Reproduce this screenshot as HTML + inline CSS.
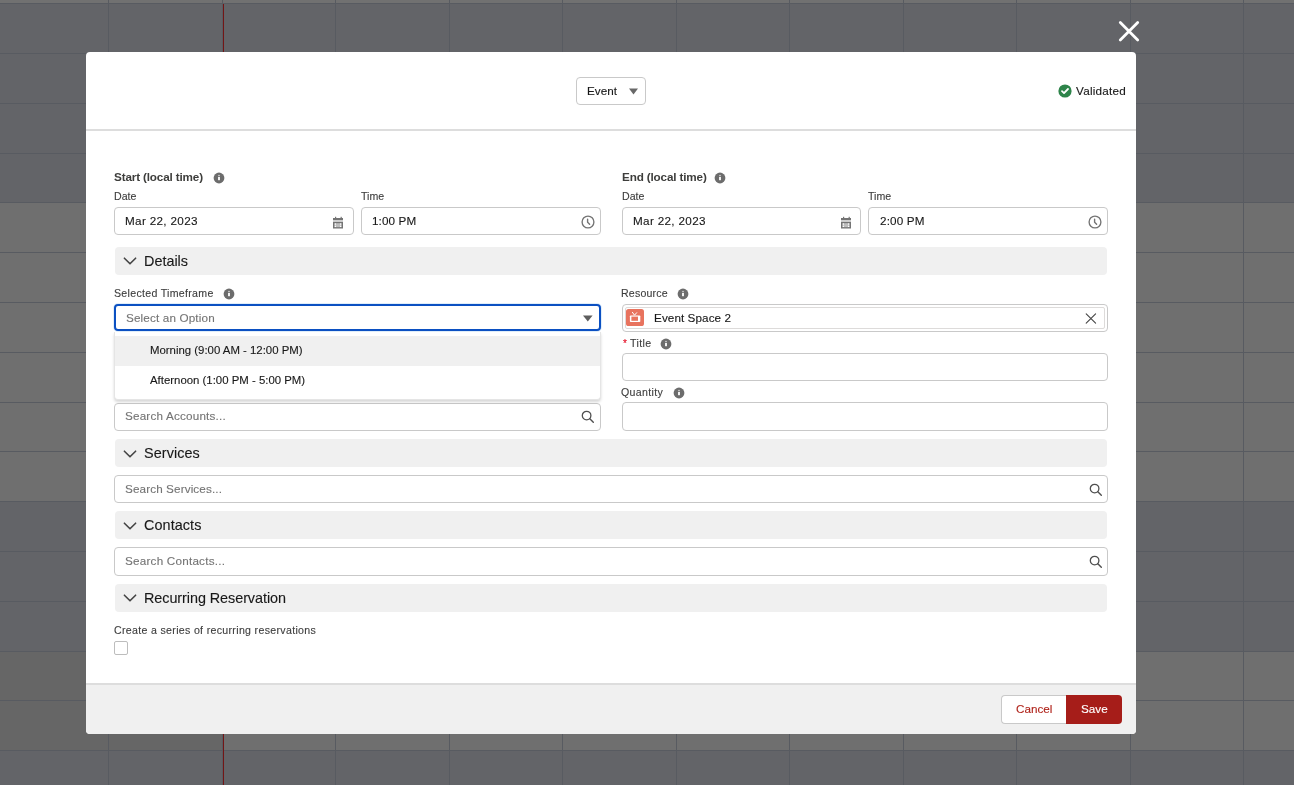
<!DOCTYPE html>
<html><head><meta charset="utf-8">
<style>
*{box-sizing:border-box;margin:0;padding:0}
html,body{width:1294px;height:785px;overflow:hidden}
body{position:relative;-webkit-font-smoothing:antialiased;background:#636468;font-family:"Liberation Sans",sans-serif;color:#181818}
.abs{position:absolute}
.row{position:absolute;left:0;width:1294px}
.hl{position:absolute;left:0;width:1294px;height:1px;background:#585b61}
.vl{position:absolute;top:0;width:1px;height:785px;background:#585b61}
.t{position:absolute;white-space:nowrap;line-height:1;will-change:transform;-webkit-text-stroke:0.12px currentColor}
.modal{position:absolute;left:86px;top:52px;width:1050px;height:682px;background:#fff;border-radius:4px;overflow:hidden}
.inp{position:absolute;border:1px solid #c9c9c9;border-radius:4px;background:#fff}
.sec{position:absolute;left:115px;width:992px;height:28px;background:#f0f0f0;border-radius:4px}
.lbl{font-size:10.6px;color:#3e3e3e}
.val{font-size:11.7px;color:#181818}
.ph{font-size:11.7px;color:#747474}
.b{font-size:11.7px;font-weight:bold;color:#3e3e3c;-webkit-text-stroke:0;letter-spacing:-0.15px}
.h{font-size:14.4px;color:#181818}
</style></head><body>
<div class="row" style="top:0;height:3px;background:#717171"></div>
<div class="row" style="top:202px;height:299px;background:#6f6f6f"></div>
<div class="row" style="top:651px;height:99px;background:#6f6f6f"></div>
<div class="abs" style="left:0;top:651px;width:223px;height:99px;background:#666666"></div>
<div class="hl" style="top:3px"></div>
<div class="hl" style="top:53px"></div>
<div class="hl" style="top:103px"></div>
<div class="hl" style="top:153px"></div>
<div class="hl" style="top:202px"></div>
<div class="hl" style="top:252px"></div>
<div class="hl" style="top:302px"></div>
<div class="hl" style="top:352px"></div>
<div class="hl" style="top:402px"></div>
<div class="hl" style="top:451px"></div>
<div class="hl" style="top:501px"></div>
<div class="hl" style="top:551px"></div>
<div class="hl" style="top:601px"></div>
<div class="hl" style="top:651px"></div>
<div class="hl" style="top:700px"></div>
<div class="hl" style="top:750px"></div>
<div class="vl" style="left:108px"></div>
<div class="vl" style="left:222px"></div>
<div class="vl" style="left:335px"></div>
<div class="vl" style="left:449px"></div>
<div class="vl" style="left:562px"></div>
<div class="vl" style="left:676px"></div>
<div class="vl" style="left:789px"></div>
<div class="vl" style="left:903px"></div>
<div class="vl" style="left:1016px"></div>
<div class="vl" style="left:1130px"></div>
<div class="vl" style="left:1243px"></div>
<div class="abs" style="left:223px;top:4px;width:1px;height:781px;background:#731515"></div>
<svg class="abs" style="left:1117px;top:19px" width="24" height="24" viewBox="0 0 24 24"><path d="M3.3 3.5L20.7 20.9M20.7 3.5L3.3 20.9" stroke="#fff" stroke-width="2.8" stroke-linecap="round"/></svg>
<div class="modal"></div>
<div class="abs" style="left:576px;top:77px;width:70px;height:28px;border:1px solid #c9c9c9;border-radius:4px"></div>
<div class="t val" style="left:586.7px;top:85px;">Event</div>
<svg class="abs" style="left:629px;top:88px" width="9" height="7" viewBox="0 0 9 7"><path d="M0 0.4H9L4.5 6.4Z" fill="#686868"/></svg>
<svg class="abs" style="left:1058px;top:83.6px" width="14" height="14" viewBox="0 0 14 14"><circle cx="7" cy="7" r="6.6" fill="#2e844a"/><path d="M4 7.2L6 9.1L10 5" stroke="#fff" stroke-width="1.8" fill="none" stroke-linecap="round" stroke-linejoin="round"/></svg>
<div class="t val" style="left:1076px;top:85px;letter-spacing:0.24px">Validated</div>
<div class="abs" style="left:86px;top:129px;width:1050px;height:2px;background:#dddddd"></div>
<div class="t b" style="left:113.6px;top:171px;">Start (local time)</div>
<svg class="abs" style="left:213px;top:172px" width="12" height="12" viewBox="0 0 12 12"><circle cx="6" cy="6" r="5.4" fill="#6c6c6c"/><rect x="5.1" y="2.9" width="1.8" height="1.2" fill="#fff" opacity="0.6"/><rect x="5.1" y="4.9" width="1.8" height="3.3" fill="#fff"/></svg>
<div class="t lbl" style="left:113.8px;top:191px;">Date</div>
<div class="t lbl" style="left:360.8px;top:191px;">Time</div>
<div class="inp" style="left:114px;top:207px;width:240px;height:28px;"></div>
<div class="t val" style="left:124.7px;top:215.3px;letter-spacing:0.33px">Mar 22, 2023</div>
<svg class="abs" style="left:333px;top:216px" width="11" height="13" viewBox="0 0 11 13"><rect x="2" y="0.8" width="1.2" height="1.6" fill="#747474"/><rect x="7.6" y="0.8" width="1.2" height="1.6" fill="#747474"/><rect x="0" y="2" width="10" height="2" fill="#747474"/><rect x="0" y="4.2" width="10" height="1.3" fill="#c4c4c4"/><rect x="0" y="5.8" width="10" height="6.7" fill="#747474"/><rect x="1.5" y="7.2" width="7" height="4" fill="#bdbdbd"/><rect x="1.7" y="7.4" width="1.3" height="1.3" fill="#fff"/><rect x="7" y="7.4" width="1.3" height="1.3" fill="#fff"/><rect x="1.7" y="9.7" width="1.3" height="1.3" fill="#fff"/><rect x="7" y="9.7" width="1.3" height="1.3" fill="#fff"/></svg>
<div class="inp" style="left:361px;top:207px;width:240px;height:28px;"></div>
<div class="t val" style="left:371.5px;top:215.3px;letter-spacing:0.1px">1:00 PM</div>
<svg class="abs" style="left:581px;top:215px" width="14" height="14" viewBox="0 0 14 14"><circle cx="7" cy="7" r="5.9" fill="none" stroke="#747474" stroke-width="1.35"/><path d="M6.6 4.2V7.2L8.6 9.2" fill="none" stroke="#747474" stroke-width="1.4" stroke-linecap="round"/></svg>
<div class="t b" style="left:621.6px;top:171px;">End (local time)</div>
<svg class="abs" style="left:714px;top:172px" width="12" height="12" viewBox="0 0 12 12"><circle cx="6" cy="6" r="5.4" fill="#6c6c6c"/><rect x="5.1" y="2.9" width="1.8" height="1.2" fill="#fff" opacity="0.6"/><rect x="5.1" y="4.9" width="1.8" height="3.3" fill="#fff"/></svg>
<div class="t lbl" style="left:621.8px;top:191px;">Date</div>
<div class="t lbl" style="left:867.8px;top:191px;">Time</div>
<div class="inp" style="left:622px;top:207px;width:239px;height:28px;"></div>
<div class="t val" style="left:632.7px;top:215.3px;letter-spacing:0.33px">Mar 22, 2023</div>
<svg class="abs" style="left:841px;top:216px" width="11" height="13" viewBox="0 0 11 13"><rect x="2" y="0.8" width="1.2" height="1.6" fill="#747474"/><rect x="7.6" y="0.8" width="1.2" height="1.6" fill="#747474"/><rect x="0" y="2" width="10" height="2" fill="#747474"/><rect x="0" y="4.2" width="10" height="1.3" fill="#c4c4c4"/><rect x="0" y="5.8" width="10" height="6.7" fill="#747474"/><rect x="1.5" y="7.2" width="7" height="4" fill="#bdbdbd"/><rect x="1.7" y="7.4" width="1.3" height="1.3" fill="#fff"/><rect x="7" y="7.4" width="1.3" height="1.3" fill="#fff"/><rect x="1.7" y="9.7" width="1.3" height="1.3" fill="#fff"/><rect x="7" y="9.7" width="1.3" height="1.3" fill="#fff"/></svg>
<div class="inp" style="left:868px;top:207px;width:240px;height:28px;"></div>
<div class="t val" style="left:880.4px;top:215.3px;letter-spacing:0.15px">2:00 PM</div>
<svg class="abs" style="left:1088px;top:215px" width="14" height="14" viewBox="0 0 14 14"><circle cx="7" cy="7" r="5.9" fill="none" stroke="#747474" stroke-width="1.35"/><path d="M6.6 4.2V7.2L8.6 9.2" fill="none" stroke="#747474" stroke-width="1.4" stroke-linecap="round"/></svg>
<div class="sec" style="top:247px"></div><svg class="abs" style="left:123px;top:257.3px" width="14" height="9" viewBox="0 0 14 9"><path d="M1.4 1.2L7 6.8L12.6 1.2" fill="none" stroke="#444" stroke-width="1.6" stroke-linecap="round" stroke-linejoin="round"/></svg><div class="t h" style="left:144.4px;top:254px;letter-spacing:0px">Details</div>
<div class="t lbl" style="left:113.8px;top:287.8px;letter-spacing:0.3px">Selected Timeframe</div>
<svg class="abs" style="left:223px;top:288px" width="12" height="12" viewBox="0 0 12 12"><circle cx="6" cy="6" r="5.4" fill="#6c6c6c"/><rect x="5.1" y="2.9" width="1.8" height="1.2" fill="#fff" opacity="0.6"/><rect x="5.1" y="4.9" width="1.8" height="3.3" fill="#fff"/></svg>
<div class="abs" style="left:113px;top:303px;width:489px;height:29px;border-radius:5px;background:rgba(1,118,211,0.12)"></div>
<div class="inp" style="left:114px;top:304px;width:487px;height:27px;border:2px solid #0b50c2"></div>
<div class="t ph" style="left:125.8px;top:312px;letter-spacing:0.15px">Select an Option</div>
<svg class="abs" style="left:583px;top:315px" width="10" height="7" viewBox="0 0 10 7"><path d="M0 0.6H9.6L4.8 6.6Z" fill="#5e5e5e"/></svg>
<div class="inp" style="left:114px;top:402.5px;width:487px;height:28.0px;"></div>
<div class="t ph" style="left:125.4px;top:410px;letter-spacing:0.19px">Search Accounts...</div>
<svg class="abs" style="left:581px;top:409.8px" width="14" height="14" viewBox="0 0 14 14"><circle cx="5.6" cy="5.6" r="4.3" fill="none" stroke="#4f4f4f" stroke-width="1.3"/><path d="M8.8 8.8L12.3 12.3" stroke="#4f4f4f" stroke-width="1.4" stroke-linecap="round"/></svg>
<div class="abs" style="left:114px;top:332px;width:487px;height:68px;background:#fff;border:1px solid #e5e5e5;border-top:none;border-radius:0 0 4px 4px;box-shadow:0 2px 3px rgba(0,0,0,0.16)"></div>
<div class="abs" style="left:115px;top:336px;width:485px;height:30px;background:#f0f0f0"></div>
<div class="t val" style="left:149.6px;top:344.6px;font-size:11.4px">Morning (9:00 AM - 12:00 PM)</div>
<div class="t val" style="left:149.6px;top:374.6px;font-size:11.4px">Afternoon (1:00 PM - 5:00 PM)</div>
<div class="t lbl" style="left:621px;top:288px;letter-spacing:0.2px">Resource</div>
<svg class="abs" style="left:677px;top:288px" width="12" height="12" viewBox="0 0 12 12"><circle cx="6" cy="6" r="5.4" fill="#6c6c6c"/><rect x="5.1" y="2.9" width="1.8" height="1.2" fill="#fff" opacity="0.6"/><rect x="5.1" y="4.9" width="1.8" height="3.3" fill="#fff"/></svg>
<div class="inp" style="left:622px;top:304px;width:486px;height:28px;"></div>
<div class="abs" style="left:625px;top:307px;width:480px;height:22px;border:1px solid #dddbda;border-radius:2px"></div>
<svg class="abs" style="left:626px;top:309px" width="18" height="17" viewBox="0 0 18 17"><rect width="18" height="17" rx="2.6" fill="#e8735e"/><path d="M6.4 3.3L8.5 6.2L10.7 3.7" stroke="#fff" stroke-width="1" fill="none" stroke-linecap="round"/><rect x="3.9" y="6.4" width="10.4" height="6.6" rx="0.8" fill="#fff"/><rect x="5.4" y="7.6" width="6.6" height="4.2" fill="#e8735e"/></svg>
<div class="t val" style="left:654.4px;top:312.3px;letter-spacing:0.08px">Event Space 2</div>
<svg class="abs" style="left:1085px;top:312.5px" width="12" height="11" viewBox="0 0 12 11"><path d="M1.2 0.8L10.6 10.2M10.6 0.8L1.2 10.2" stroke="#444" stroke-width="1.1" stroke-linecap="round"/></svg>
<div class="t" style="left:623.3px;top:338.8px;font-size:10px;color:#e3001b">*</div>
<div class="t lbl" style="left:629.8px;top:338.4px;letter-spacing:0.4px">Title</div>
<svg class="abs" style="left:660px;top:337.6px" width="12" height="12" viewBox="0 0 12 12"><circle cx="6" cy="6" r="5.4" fill="#6c6c6c"/><rect x="5.1" y="2.9" width="1.8" height="1.2" fill="#fff" opacity="0.6"/><rect x="5.1" y="4.9" width="1.8" height="3.3" fill="#fff"/></svg>
<div class="inp" style="left:622px;top:353px;width:486px;height:28px;"></div>
<div class="t lbl" style="left:621px;top:387.2px;letter-spacing:0.35px">Quantity</div>
<svg class="abs" style="left:672.5px;top:386.7px" width="12" height="12" viewBox="0 0 12 12"><circle cx="6" cy="6" r="5.4" fill="#6c6c6c"/><rect x="5.1" y="2.9" width="1.8" height="1.2" fill="#fff" opacity="0.6"/><rect x="5.1" y="4.9" width="1.8" height="3.3" fill="#fff"/></svg>
<div class="inp" style="left:622px;top:402px;width:486px;height:28.5px;"></div>
<div class="sec" style="top:439.4px"></div><svg class="abs" style="left:123px;top:449.7px" width="14" height="9" viewBox="0 0 14 9"><path d="M1.4 1.2L7 6.8L12.6 1.2" fill="none" stroke="#444" stroke-width="1.6" stroke-linecap="round" stroke-linejoin="round"/></svg><div class="t h" style="left:144.4px;top:446.4px;letter-spacing:0.08px">Services</div>
<div class="inp" style="left:114px;top:475.3px;width:994px;height:27.30000000000001px;"></div>
<div class="t ph" style="left:125.4px;top:482.7px;letter-spacing:0.12px">Search Services...</div>
<svg class="abs" style="left:1089px;top:483.2px" width="14" height="14" viewBox="0 0 14 14"><circle cx="5.6" cy="5.6" r="4.3" fill="none" stroke="#4f4f4f" stroke-width="1.3"/><path d="M8.8 8.8L12.3 12.3" stroke="#4f4f4f" stroke-width="1.4" stroke-linecap="round"/></svg>
<div class="sec" style="top:511.3px"></div><svg class="abs" style="left:123px;top:521.6px" width="14" height="9" viewBox="0 0 14 9"><path d="M1.4 1.2L7 6.8L12.6 1.2" fill="none" stroke="#444" stroke-width="1.6" stroke-linecap="round" stroke-linejoin="round"/></svg><div class="t h" style="left:144.4px;top:518.3px;letter-spacing:0.08px">Contacts</div>
<div class="inp" style="left:114px;top:547.3px;width:994px;height:28.300000000000068px;"></div>
<div class="t ph" style="left:125.4px;top:554.7px;letter-spacing:0.22px">Search Contacts...</div>
<svg class="abs" style="left:1089px;top:555.3px" width="14" height="14" viewBox="0 0 14 14"><circle cx="5.6" cy="5.6" r="4.3" fill="none" stroke="#4f4f4f" stroke-width="1.3"/><path d="M8.8 8.8L12.3 12.3" stroke="#4f4f4f" stroke-width="1.4" stroke-linecap="round"/></svg>
<div class="sec" style="top:584.1px"></div><svg class="abs" style="left:123px;top:594.4px" width="14" height="9" viewBox="0 0 14 9"><path d="M1.4 1.2L7 6.8L12.6 1.2" fill="none" stroke="#444" stroke-width="1.6" stroke-linecap="round" stroke-linejoin="round"/></svg><div class="t h" style="left:144.4px;top:591.1px;letter-spacing:-0.06px">Recurring Reservation</div>
<div class="t lbl" style="left:113.8px;top:625px;letter-spacing:0.32px">Create a series of recurring reservations</div>
<div class="abs" style="left:114px;top:641px;width:14px;height:14px;border:1px solid #bdbdbd;border-radius:2px;background:#fff"></div>
<div class="abs" style="left:86px;top:683px;width:1050px;height:51px;background:#f0f0f0;border-top:2px solid #dddddd;border-radius:0 0 4px 4px"></div>
<div class="abs" style="left:1001px;top:695px;width:66px;height:29px;background:#fff;border:1px solid #c9c9c9;border-right:none;border-radius:4px 0 0 4px"></div>
<div class="abs" style="left:1066px;top:695px;width:56px;height:29px;background:#a61d19;border-radius:0 4px 4px 0"></div>
<div class="t val" style="left:1015.7px;top:703px;color:#b0241b">Cancel</div>
<div class="t val" style="left:1080.6px;top:703px;color:#fff">Save</div>
</body></html>
